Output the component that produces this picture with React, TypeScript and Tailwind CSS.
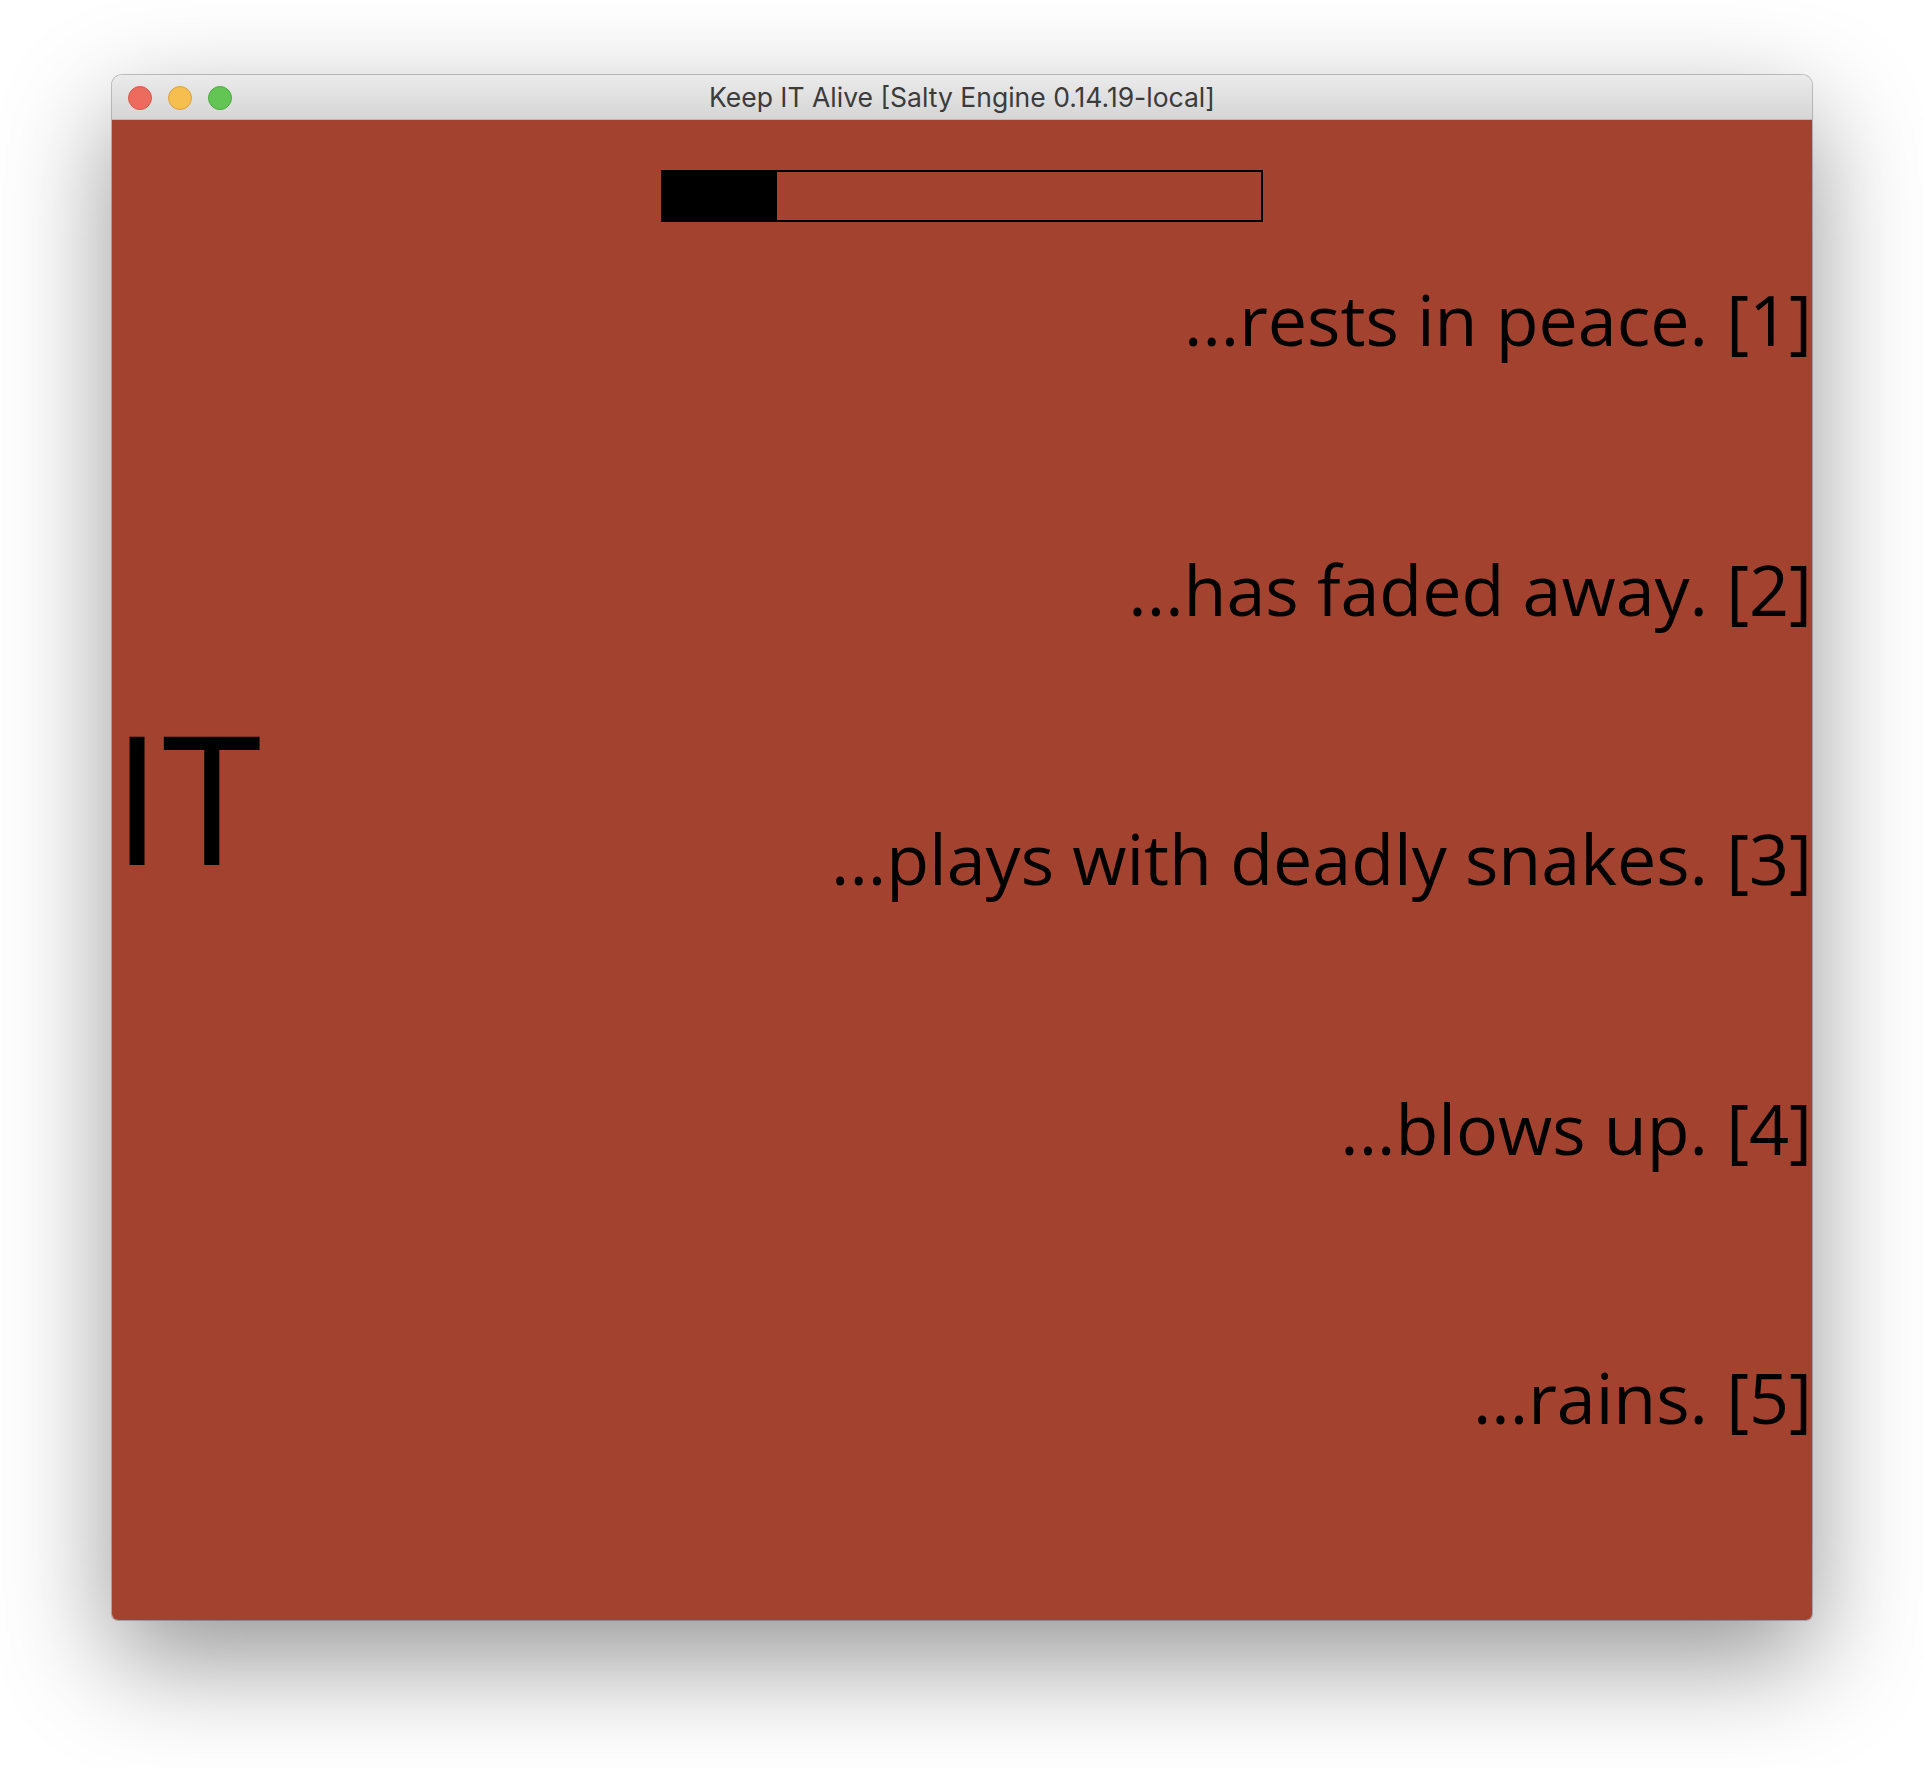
import React from "react";

const options = [
  "...rests in peace. [1]",
  "...has faded away. [2]",
  "...plays with deadly snakes. [3]",
  "...blows up. [4]",
  "...rains. [5]",
];

// progress of the timer bar, in px of the 602px track
const progress = 116;

function TrafficLights() {
  return (
    <div className="flex items-center gap-4">
      <span className="w-6 h-6 rounded-full bg-[#ed6a5e] border border-[#d7584c]" />
      <span className="w-6 h-6 rounded-full bg-[#f5be4f] border border-[#d9a33f]" />
      <span className="w-6 h-6 rounded-full bg-[#62c554] border border-[#4fa941]" />
    </div>
  );
}

export default function App() {
  return (
    <div className="w-[1924px] h-[1768px] bg-white pt-[75px] pl-[112px]">
      {/* window */}
      <div className="w-[1700px] h-[1545px] flex flex-col rounded-t-[10px] rounded-b-[6px] overflow-hidden shadow-[0_0_0_1px_rgba(0,0,0,0.22),0_40px_110px_rgba(0,0,0,0.42)]">
        {/* title bar */}
        <div className="relative h-[45px] flex items-center pl-4 pt-[1px] border-b border-[#b9b9b9] bg-gradient-to-b from-[#ebebeb] to-[#d5d5d5]">
          <TrafficLights />
          <div className="absolute inset-0 pt-[2px] flex items-center justify-center text-[26.5px] text-[#3b3b3b] font-['Inter','Liberation_Sans',sans-serif] pointer-events-none">
            Keep IT Alive [Salty Engine 0.14.19-local]
          </div>
        </div>

        {/* game area */}
        <div className="flex-1 bg-[#a2422f] flex flex-col font-['Open_Sans','Noto_Sans',sans-serif] text-black">
          <div className="mt-[50px] self-center flex w-[602px] h-[52px]">
            <div className="h-full bg-black" style={{ width: progress }} />
            <div className="flex-1 h-full border-2 border-l-0 border-black" />
          </div>

          <div className="mt-[49px] grid grid-cols-[auto_1fr]">
            <div className="pt-[402px] text-[180px] leading-[245px]">IT</div>
            <div className="flex flex-col items-end gap-[173.5px] text-[70px] leading-[96px]">
              {options.map((o) => (
                <div key={o}>{o}</div>
              ))}
            </div>
          </div>
        </div>
      </div>
    </div>
  );
}
